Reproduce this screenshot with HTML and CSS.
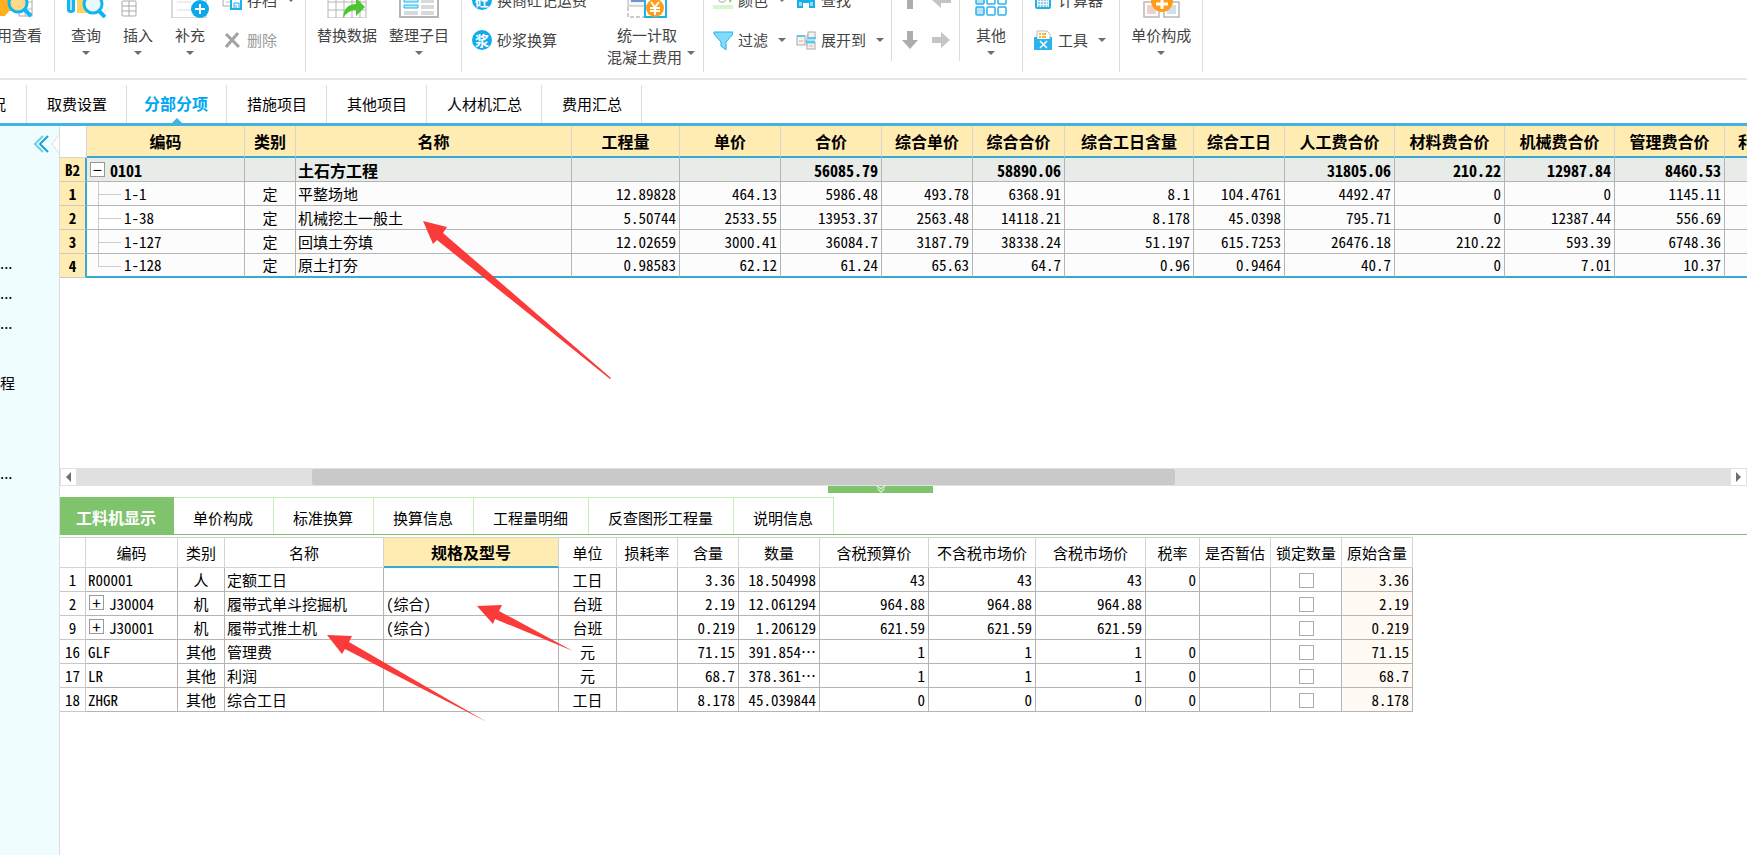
FILE: index.html
```html
<!DOCTYPE html>
<html lang="zh-CN">
<head>
<meta charset="utf-8">
<title>分部分项</title>
<link rel="stylesheet" href="styles.css">
</head>
<body>
<header class="ribbon">
  <div class="group group-first">
    <button class="big">
      <svg class="art" viewBox="0 0 40 38"><rect x="20" y="8" width="13" height="28" fill="#fff" stroke="#aaa"/><path d="M20 22h13M20 29h13M26 8v28" stroke="#bbb"/><path d="M0 10h24v21h-14l-4 5H0z" fill="#ffb01f"/><circle cx="19" cy="23" r="9" fill="#ffd98a" stroke="#12b5f3" stroke-width="3"/><path d="M25 29l7 7" stroke="#12b5f3" stroke-width="4"/></svg>
      <span>用查看</span>
    </button>
  </div>
  <i class="sep"></i>
  <div class="group group-edit">
    <button class="big">
      <svg class="art" viewBox="0 0 40 38"><path d="M1 5h8v25a4 3 0 0 1-8 0z" fill="#12b5f3"/><path d="M4 5h2v25H4z" fill="#a8e6fb"/><path d="M11 5h14v30l-4-2H11z" fill="#ffd45e"/><circle cx="27" cy="24" r="9" fill="#e9f8fe" stroke="#12b5f3" stroke-width="3"/><path d="M33 31l6 6" stroke="#12b5f3" stroke-width="4"/></svg>
      <span>查询</span><i class="caret"></i>
    </button>
    <button class="big">
      <svg class="art" viewBox="0 0 40 38"><rect x="4" y="21" width="14" height="15" rx="1" fill="#fff" stroke="#a9a9a9"/><path d="M11 21v15M4 26h14M4 31h14" stroke="#a9a9a9"/></svg>
      <span>插入</span><i class="caret"></i>
    </button>
    <button class="big">
      <svg class="art" viewBox="0 0 40 38"><path d="M2 5v33h34V5" fill="#fff" stroke="#b5b5b5"/><path d="M7 22h14M7 30h14" stroke="#ddd"/><circle cx="30" cy="29" r="9" fill="#0aa9ee"/><path d="M25 29h10M30 24v10" stroke="#fff" stroke-width="2"/></svg>
      <span>补充</span><i class="caret"></i>
    </button>
    <div class="stack">
      <button class="small">
        <svg class="ico" viewBox="0 0 20 20"><path d="M1 0v16h8" fill="none" stroke="#aaa"/><path d="M4 12h4" stroke="#bbb"/><path d="M9 5h10v14H9z" fill="#fff" stroke="#1fb2ea" stroke-width="2"/><path d="M12 19v-6h5v6M14 15v3" fill="none" stroke="#1fb2ea"/></svg>
        <span>存档</span><i class="caret"></i>
      </button>
      <button class="small" disabled>
        <svg class="ico" viewBox="0 0 20 20"><path d="M4 4l13 13M16 3L4 17" stroke="#a3a3a3" stroke-width="3"/></svg>
        <span>删除</span>
      </button>
    </div>
  </div>
  <i class="sep"></i>
  <div class="group group-data">
    <button class="big">
      <svg class="art" viewBox="0 0 40 38"><path d="M1 5h38v33H1z" fill="#fff"/><path d="M1 5v33h38V5M1 22h38M1 30h38M9 5v33M17 5v33M25 5v33M33 5v33" fill="none" stroke="#b5b5b5"/><path d="M16 38q1-14 13-14v-6l9 9-9 9v-6q-8 0-13 8z" fill="#4cc62e"/></svg>
      <span>替换数据</span>
    </button>
    <button class="big">
      <svg class="art" viewBox="0 0 40 38"><path d="M1 5v32h38V5" fill="#fff" stroke="#b5b5b5" stroke-width="2"/><path d="M5 19h14v3H5zM5 25h14v3H5z" fill="#bdeafa" stroke="#27b7ec"/><path d="M22 19h13v4H22zM22 25h13v4H22zM22 31h13v4H22zM5 31h14v4H5z" fill="#d9d9dc"/></svg>
      <span>整理子目</span><i class="caret"></i>
    </button>
  </div>
  <i class="sep"></i>
  <div class="group group-mix">
    <div class="stack">
      <button class="small"><b class="disc">砼</b><span>换商砼记运费</span></button>
      <button class="small"><b class="disc">浆</b><span>砂浆换算</span></button>
    </div>
    <button class="big">
      <svg class="art" viewBox="0 0 40 38"><rect x="1" y="4" width="20" height="22" fill="#f3f6fb" stroke="#b5b5b5"/><path d="M4 21h13" stroke="#6d94cf" stroke-width="2"/><path d="M1 27v10h18" fill="none" stroke="#999" stroke-dasharray="4 2"/><path d="M18 6h21v31H18z" fill="#fff" stroke="#1fb2ea" stroke-width="2"/><circle cx="28" cy="28" r="9" fill="#ff9e16"/><path d="M24 22l4 5 4-5M28 27v8M23 28h10M23 31h10" fill="none" stroke="#fff" stroke-width="2"/></svg>
      <span>统一计取</span>
      <span class="with-caret">混凝土费用<i class="caret"></i></span>
    </button>
  </div>
  <i class="sep"></i>
  <div class="group group-view">
    <div class="stack">
      <button class="small">
        <svg class="ico" viewBox="0 0 20 20"><path d="M4 7l6-6 6 6-5 5H7z" fill="#fff" stroke="#aaa"/><path d="M15 7q3 3 2 5" fill="none" stroke="#7bc862" stroke-width="2"/><path d="M0 15h20v4H0z" fill="#d9f5cf"/></svg>
        <span>颜色</span><i class="caret"></i>
      </button>
      <button class="small">
        <svg class="ico" viewBox="0 0 20 20"><path d="M1 2h19v2l-7 8v8l-5-4v-4L1 4z" fill="#84dafa" stroke="#22b1e8"/></svg>
        <span>过滤</span><i class="caret"></i>
      </button>
    </div>
    <div class="stack">
      <button class="small">
        <svg class="ico" viewBox="0 0 20 20"><path d="M1 18V9l3-6h4v6h4V3h4l3 6v9h-6v-5H7v5z" fill="#16aeea"/><path d="M3 12h3v4H3zM14 12h3v4h-3z" fill="#8fdcf8"/></svg>
        <span>查找</span>
      </button>
      <button class="small">
        <svg class="ico" viewBox="0 0 20 20"><path d="M9 11h2V5h2M11 11v5" fill="none" stroke="#aaa"/><rect x="1" y="6" width="8" height="9" fill="#f3f3f3" stroke="#aaa"/><path d="M3 11h4" stroke="#e2a77a"/><path d="M1 6h8" stroke="#57c9f3" stroke-width="2"/><rect x="12" y="2" width="7" height="7" fill="#f3f3f3" stroke="#aaa"/><path d="M12 8h8" stroke="#57c9f3" stroke-width="2"/><rect x="11" y="12" width="8" height="7" fill="#f3f3f3" stroke="#aaa"/><path d="M10 12h9" stroke="#57c9f3" stroke-width="3"/><path d="M13 16h4" stroke="#e2a77a"/></svg>
        <span>展开到</span><i class="caret"></i>
      </button>
    </div>
  </div>
  <i class="sep short"></i>
  <div class="group group-move">
    <div class="stack">
      <button class="small" aria-label="上移"><svg class="ico" viewBox="0 0 20 20"><path d="M10 0l8 9h-5v10H7V9H2z" fill="#adadad"/></svg></button>
      <button class="small" aria-label="下移"><svg class="ico" viewBox="0 0 20 20"><path d="M7 1h6v9h5l-8 9-8-9h5z" fill="#adadad"/></svg></button>
    </div>
    <div class="stack">
      <button class="small" aria-label="升级"><svg class="ico" viewBox="0 0 20 20"><path d="M20 8v5H10v5L1 10l9-8v6z" fill="#c4c4c4"/></svg></button>
      <button class="small" aria-label="降级"><svg class="ico" viewBox="0 0 20 20"><path d="M1 7h9V2l9 8-9 8v-5H1z" fill="#c4c4c4"/></svg></button>
    </div>
  </div>
  <i class="sep short"></i>
  <div class="group group-other">
    <button class="big">
      <svg class="art" viewBox="0 0 40 38"><g fill="#fff" stroke="#2ab3e8" stroke-width="1.5"><rect x="5" y="16" width="8" height="8" rx="1" fill="#b9e3f5"/><rect x="16" y="16" width="8" height="8" rx="1"/><rect x="27" y="16" width="8" height="8" rx="1"/><rect x="5" y="27" width="8" height="8" rx="1" fill="#b9e3f5"/><rect x="16" y="27" width="8" height="8" rx="1"/><rect x="27" y="27" width="8" height="8" rx="1"/></g></svg>
      <span>其他</span><i class="caret"></i>
    </button>
  </div>
  <i class="sep"></i>
  <div class="group group-tool">
    <div class="stack">
      <button class="small">
        <svg class="ico" viewBox="0 0 20 20"><rect x="3" y="2" width="14" height="16" rx="1" fill="#e8f7fd" stroke="#1fb2ea" stroke-width="2"/><path d="M5 10h10M5 13h10M5 16h10" stroke="#5b93c5" stroke-dasharray="2 1"/></svg>
        <span>计算器</span>
      </button>
      <button class="small">
        <svg class="ico" viewBox="0 0 20 20"><path d="M4 1h10l3 3v6H4z" fill="#fff" stroke="#bbb"/><path d="M6 4h2M9 4h4M6 7h2M9 7h4" stroke="#ffb52e" stroke-width="2"/><path d="M1 7h3v2h13V7h2v13H1z" fill="#2bb4ec"/><path d="M7 11l7 7M14 11l-7 7" stroke="#fff" stroke-width="1.5"/></svg>
        <span>工具</span><i class="caret"></i>
      </button>
    </div>
  </div>
  <i class="sep"></i>
  <div class="group group-price">
    <button class="big">
      <svg class="art" viewBox="0 0 40 38"><g fill="#fff" stroke="#b8b8b8" stroke-width="1.5"><rect x="3" y="22" width="15" height="15"/><rect x="23" y="22" width="15" height="15"/></g><path d="M6 25h9v9H6z" fill="#edcfd0"/><path d="M26 25h9v9h-9z" fill="#cfe0ea"/><circle cx="21" cy="21" r="11" fill="#ff9e16"/><path d="M15 24h12M21 18v11" stroke="#fff" stroke-width="3"/></svg>
      <span>单价构成</span><i class="caret"></i>
    </button>
  </div>
  <i class="sep"></i>
</header>

<nav class="tabs">
  <a href="#" class="tab tab-cut">况</a>
  <a href="#" class="tab">取费设置</a>
  <a href="#" class="tab active">分部分项</a>
  <a href="#" class="tab">措施项目</a>
  <a href="#" class="tab">其他项目</a>
  <a href="#" class="tab">人材机汇总</a>
  <a href="#" class="tab">费用汇总</a>
</nav>

<div class="work">
  <aside class="side">
    <button class="fold" aria-label="收起"><svg viewBox="0 0 26 24"><path d="M10 4L2 12l8 8" fill="none" stroke="#6fcdf0" stroke-width="2"/><path d="M15 4l-8 8 8 8" fill="none" stroke="#1a9fd0" stroke-width="2"/><path d="M26 2v2l-7 8 7 8v2z" fill="#fff"/><path d="M26 3l-7 9 7 9" fill="none" stroke="#ddd"/></svg></button>
    <ul class="tree">
      <li>...</li><li>...</li><li>...</li><li></li><li>程</li><li></li><li></li><li>...</li>
    </ul>
  </aside>

  <main class="main">
    <section class="upper">
      <table class="grid bill">
        <colgroup><col class="w27"><col class="w158"><col class="w51"><col class="w276"><col class="w108"><col class="w101"><col class="w101"><col class="w91"><col class="w92"><col class="w129"><col class="w91"><col class="w110"><col class="w110"><col class="w110"><col class="w110"><col class="w91"></colgroup>
        <thead><tr><th class="corner"></th><th>编码</th><th>类别</th><th>名称</th><th>工程量</th><th>单价</th><th>合价</th><th>综合单价</th><th>综合合价</th><th>综合工日含量</th><th>综合工日</th><th>人工费合价</th><th>材料费合价</th><th>机械费合价</th><th>管理费合价</th><th>利润合价</th></tr></thead>
        <tbody>
          <tr class="sum"><th>B2</th><td><button class="box" aria-label="折叠">−</button>0101</td><td></td><td>土石方工程</td><td></td><td></td><td class="n">56085.79</td><td></td><td class="n">58890.06</td><td></td><td></td><td class="n">31805.06</td><td class="n">210.22</td><td class="n">12987.84</td><td class="n">8460.53</td><td></td></tr>
          <tr><th>1</th><td class="child">1-1</td><td class="c">定</td><td>平整场地</td><td class="n">12.89828</td><td class="n">464.13</td><td class="n">5986.48</td><td class="n">493.78</td><td class="n">6368.91</td><td class="n">8.1</td><td class="n">104.4761</td><td class="n">4492.47</td><td class="n">0</td><td class="n">0</td><td class="n">1145.11</td><td></td></tr>
          <tr><th>2</th><td class="child current">1-38</td><td class="c">定</td><td>机械挖土一般土</td><td class="n">5.50744</td><td class="n">2533.55</td><td class="n">13953.37</td><td class="n">2563.48</td><td class="n">14118.21</td><td class="n">8.178</td><td class="n">45.0398</td><td class="n">795.71</td><td class="n">0</td><td class="n">12387.44</td><td class="n">556.69</td><td></td></tr>
          <tr><th>3</th><td class="child">1-127</td><td class="c">定</td><td>回填土夯填</td><td class="n">12.02659</td><td class="n">3000.41</td><td class="n">36084.7</td><td class="n">3187.79</td><td class="n">38338.24</td><td class="n">51.197</td><td class="n">615.7253</td><td class="n">26476.18</td><td class="n">210.22</td><td class="n">593.39</td><td class="n">6748.36</td><td></td></tr>
          <tr><th>4</th><td class="child">1-128</td><td class="c">定</td><td>原土打夯</td><td class="n">0.98583</td><td class="n">62.12</td><td class="n">61.24</td><td class="n">65.63</td><td class="n">64.7</td><td class="n">0.96</td><td class="n">0.9464</td><td class="n">40.7</td><td class="n">0</td><td class="n">7.01</td><td class="n">10.37</td><td></td></tr>
        </tbody>
      </table>
    </section>

    <div class="scroll">
      <button class="step" aria-label="向左"><svg viewBox="0 0 15 16"><path d="M10 3v10L5 8z" fill="#6e6e78"/></svg></button>
      <div class="track"><div class="thumb"></div></div>
      <button class="step" aria-label="向右"><svg viewBox="0 0 15 16"><path d="M5 3v10l5-5z" fill="#6e6e78"/></svg></button>
    </div>
    <div class="splitter"><button class="grip" aria-label="收起下方面板"><svg viewBox="0 0 12 8"><path d="M1 0l5 3 5-3M2 3l4 4 4-4" fill="none" stroke="#d9f0d2" stroke-width="1.5"/></svg></button></div>

    <nav class="subtabs">
      <a href="#" class="subtab active">工料机显示</a>
      <a href="#" class="subtab">单价构成</a>
      <a href="#" class="subtab">标准换算</a>
      <a href="#" class="subtab">换算信息</a>
      <a href="#" class="subtab">工程量明细</a>
      <a href="#" class="subtab">反查图形工程量</a>
      <a href="#" class="subtab">说明信息</a>
    </nav>

    <section class="lower">
      <table class="grid res">
        <colgroup><col class="w26"><col class="w92"><col class="w47"><col class="w159"><col class="w175"><col class="w58"><col class="w61"><col class="w61"><col class="w81"><col class="w109"><col class="w107"><col class="w110"><col class="w54"><col class="w71"><col class="w71"><col class="w71"></colgroup>
        <thead><tr><th></th><th>编码</th><th>类别</th><th>名称</th><th class="sel">规格及型号</th><th>单位</th><th>损耗率</th><th>含量</th><th>数量</th><th>含税预算价</th><th>不含税市场价</th><th>含税市场价</th><th>税率</th><th>是否暂估</th><th>锁定数量</th><th>原始含量</th></tr></thead>
        <tbody>
          <tr><th>1</th><td>R00001</td><td class="c">人</td><td>定额工日</td><td></td><td class="c">工日</td><td></td><td class="n">3.36</td><td class="n">18.504998</td><td class="n">43</td><td class="n">43</td><td class="n">43</td><td class="n">0</td><td></td><td class="c"><input type="checkbox" aria-label="锁定数量"></td><td class="n orig">3.36</td></tr>
          <tr><th>2</th><td><button class="box" aria-label="展开">+</button>J30004</td><td class="c">机</td><td>履带式单斗挖掘机</td><td>(综合)</td><td class="c">台班</td><td></td><td class="n">2.19</td><td class="n">12.061294</td><td class="n">964.88</td><td class="n">964.88</td><td class="n">964.88</td><td></td><td></td><td class="c"><input type="checkbox" aria-label="锁定数量"></td><td class="n orig">2.19</td></tr>
          <tr><th>9</th><td><button class="box" aria-label="展开">+</button>J30001</td><td class="c">机</td><td>履带式推土机</td><td>(综合)</td><td class="c">台班</td><td></td><td class="n">0.219</td><td class="n">1.206129</td><td class="n">621.59</td><td class="n">621.59</td><td class="n">621.59</td><td></td><td></td><td class="c"><input type="checkbox" aria-label="锁定数量"></td><td class="n orig">0.219</td></tr>
          <tr><th>16</th><td>GLF</td><td class="c">其他</td><td>管理费</td><td></td><td class="c">元</td><td></td><td class="n">71.15</td><td class="n">391.854…</td><td class="n">1</td><td class="n">1</td><td class="n">1</td><td class="n">0</td><td></td><td class="c"><input type="checkbox" aria-label="锁定数量"></td><td class="n orig">71.15</td></tr>
          <tr><th>17</th><td>LR</td><td class="c">其他</td><td>利润</td><td></td><td class="c">元</td><td></td><td class="n">68.7</td><td class="n">378.361…</td><td class="n">1</td><td class="n">1</td><td class="n">1</td><td class="n">0</td><td></td><td class="c"><input type="checkbox" aria-label="锁定数量"></td><td class="n orig">68.7</td></tr>
          <tr><th>18</th><td>ZHGR</td><td class="c">其他</td><td>综合工日</td><td></td><td class="c">工日</td><td></td><td class="n">8.178</td><td class="n">45.039844</td><td class="n">0</td><td class="n">0</td><td class="n">0</td><td class="n">0</td><td></td><td class="c"><input type="checkbox" aria-label="锁定数量"></td><td class="n orig">8.178</td></tr>
        </tbody>
      </table>
    </section>
  </main>
</div>

<svg class="marks" width="620" height="730" viewBox="0 0 620 730" aria-hidden="true">
  <path d="M423 221l24 6-4 6 168 145-1 1-173-139-4 4z"/>
  <path d="M477 606l25-1-3 6 74 40-78-32-2 5z"/>
  <path d="M327 635l25 1-3 6 138 80-142-73-3 5z"/>
</svg>
</body>
</html>
```

FILE: styles.css
```css
* { box-sizing: border-box; }

body {
  margin: 0;
  min-height: 100vh;
  display: flex;
  flex-direction: column;
  position: relative;
  overflow: hidden;
  background: #fff;
  color: #000;
  font: 15px/22px "Noto Sans CJK SC", sans-serif;
}

button {
  padding: 0;
  border: 0;
  background: none;
  color: inherit;
  font: inherit;
}

a { color: inherit; text-decoration: none; }

/* ribbon: its upper part is scrolled out of view */
.ribbon {
  display: flex;
  align-items: flex-end;
  height: 80px;
  padding-bottom: 6px;
  border-bottom: 2px solid #e6e6e6;
  overflow: hidden;
  color: #444;
}
.group {
  display: flex;
  flex: none;
  align-items: flex-start;
  height: 92px;
}
.sep {
  flex: none;
  width: 1px;
  height: 92px;
  background: #dcdcdc;
}
.sep.short { height: 81px; margin-bottom: 11px; }
.group-first { width: 54px; justify-content: flex-end; padding-right: 12px; }
.group-edit { padding: 0 10px 0 5px; }
.group-edit .big { width: 52px; }
.group-edit .stack { padding-left: 6px; }
.group-data { gap: 12px; padding: 0 12px 0 11px; }
.group-mix { gap: 20px; padding: 0 8px 0 10px; }
.group-mix .big > :not(.with-caret) { margin-right: 8px; }
.group-view { gap: 10px; padding: 0 7px 0 9px; }
.group-move { gap: 11px; padding: 0 8px; }
.group-other { width: 62px; justify-content: center; }
.group-tool { padding: 0 13px 0 10px; }
.group-price { padding: 0 11px; }

.big {
  display: flex;
  flex-direction: column;
  align-items: center;
  white-space: nowrap;
}
.art { width: 40px; height: 38px; margin-bottom: 6px; }
.big > .caret { margin-top: 5px; }
.caret {
  width: 8px;
  border: 4px solid transparent;
  border-top-color: #6c6c78;
  border-bottom: 0;
}
.with-caret { display: flex; gap: 5px; }
.with-caret .caret { margin-top: 5px; height: 4px; }

.stack { display: flex; flex-direction: column; }
.small {
  display: flex;
  align-items: center;
  gap: 5px;
  height: 40px;
  white-space: nowrap;
}
.small .caret { margin-left: 5px; }
.small:disabled { color: #999; }
.ico { width: 20px; height: 20px; }
.disc {
  width: 20px;
  height: 20px;
  border-radius: 50%;
  background: #0fabeb;
  color: #fff;
  font-size: 14px;
  line-height: 20px;
  text-align: center;
}

/* page tabs */
.tabs {
  display: flex;
  align-items: flex-end;
  height: 46px;
  border-bottom: 3px solid #40b4e5;
}
.tab {
  position: relative;
  height: 38px;
  padding: 7px 20px 0;
  border-right: 1px solid #ddd;
  line-height: 24px;
}
.tab:not(.tab-cut) { padding: 7px 19px 0 20px; }
.tab-cut { width: 27px; padding: 7px 20px 0 0; direction: rtl; }
.tab.active {
  padding: 6px 18px 0 17px;
  color: #00a8f3;
  font-size: 16px;
  font-weight: 700;
}
.tab.active::after {
  content: "";
  position: absolute;
  left: 45px;
  bottom: 0;
  border: 5px solid transparent;
  border-top: 0;
  border-bottom-color: #40b4e5;
}

.work { display: flex; flex: 1; }
.side {
  display: flex;
  flex-direction: column;
  flex: none;
  width: 60px;
  border-right: 1px solid #dcdcdc;
  background: #f0fdff;
}
.fold { align-self: flex-end; height: 24px; margin-top: 6px; }
.fold svg { display: block; width: 26px; height: 24px; }
.tree { margin: 92px 0 0; padding: 0; list-style: none; }
.tree li { height: 30px; line-height: 30px; }

.main { flex: 1; min-width: 0; display: flex; flex-direction: column; }
.upper { flex: none; height: 40vh; overflow: hidden; }

/* grids */
.grid {
  width: 0;
  table-layout: fixed;
  border-collapse: separate;
  border-spacing: 0;
  font-feature-settings: "hwid";
}
.grid th, .grid td {
  height: 24px;
  padding: 1px 2px 0;
  border-right: 1px solid #b4b4b4;
  border-bottom: 1px solid #b4b4b4;
  line-height: 22px;
  text-align: left;
  white-space: nowrap;
  overflow: hidden;
}
.grid th { padding: 1px 0 0; text-align: center; font-weight: 400; }
.grid .n { padding-right: 3px; text-align: right; }
.grid .c { text-align: center; }

.bill thead th {
  height: 32px;
  padding: 0;
  border-right-color: #d4d4d4;
  border-bottom: 2px solid #3aa9d2;
  background: #ffecb3;
  font-size: 16px;
  font-weight: 700;
}
.bill thead .corner { background: #fff; border-bottom: 1px solid #d4d4d4; }
.bill tbody th {
  border-right: 2px solid #3aa9d2;
  border-bottom-color: #c9c9c9;
  background: #ffecb3;
  font-weight: 700;
}
.bill td { background: #fcfcfc; }
.bill .current { background: #fff; }
.bill .sum td { background: #e8ece8; font-size: 16px; font-weight: 700; }
.bill tbody tr:last-child td { padding-top: 0; border-bottom: 2px solid #3aa9d2; }
.grid .child { position: relative; padding-left: 37px; }
.child::before, .child::after {
  content: "";
  position: absolute;
  left: 11px;
  top: 0;
  width: 22px;
  height: 12px;
  border-left: 1px solid #ccc;
  border-bottom: 1px solid #ccc;
}
.child::after { width: 1px; height: 24px; border-bottom: 0; }
.bill tbody tr:last-child .child::after { display: none; }

.box {
  width: 15px;
  height: 15px;
  margin: 0 5px 0 1px;
  border: 1px solid #999;
  background: #fff;
  font-size: 16px;
  font-weight: 400;
  line-height: 12px;
  vertical-align: 1px;
}

/* horizontal scroll bar and splitter */
.scroll {
  display: flex;
  height: 18px;
  padding: 1px;
  background: #e1e1e1;
}
.step { width: 15px; background: #fff; }
.step svg { display: block; width: 15px; height: 16px; }
.track { flex: 1; padding: 0 33% 0 14%; }
.thumb { height: 16px; border-radius: 2px; background: #c9c9c9; }
.splitter { height: 11px; text-align: center; line-height: 0; }
.grip { width: 105px; height: 7px; margin-right: 46px; background: #7fc36c; }
.grip svg { width: 12px; height: 7px; }

.subtabs { display: flex; height: 38px; border-bottom: 1px solid #7fc36c; }
.subtab {
  padding: 9px 20px 0 19px;
  border: 1px solid #c9edba;
  border-width: 1px 1px 0 0;
}
.subtab.active {
  padding: 8px 17px 0 16px;
  border-color: #7fc36c;
  background: #7fc36c;
  color: #fff;
  font-size: 16px;
  font-weight: 700;
}

.lower { flex: 1; padding-top: 2px; overflow: hidden; }
.res thead th {
  height: 31px;
  padding: 0;
  border-color: #d4d4d4;
  border-top: 1px solid #d4d4d4;
}
.res thead .sel {
  border-bottom: 2px solid #3aa9d2;
  background: #ffecb3;
  font-size: 16px;
  font-weight: 700;
}
.res tbody th { border-color: #c9c9c9; }
.res .orig { background: #fffaf3; }
.res input {
  appearance: none;
  display: block;
  width: 15px;
  height: 15px;
  margin: 0 auto;
  border: 1px solid #aaa;
  background: #fff;
}

.w26 { width: 26px; } .w27 { width: 27px; } .w47 { width: 47px; }
.w51 { width: 51px; } .w54 { width: 54px; } .w58 { width: 58px; }
.w61 { width: 61px; } .w71 { width: 71px; } .w81 { width: 81px; }
.w91 { width: 91px; } .w92 { width: 92px; } .w101 { width: 101px; }
.w107 { width: 107px; } .w108 { width: 108px; } .w109 { width: 109px; }
.w110 { width: 110px; } .w129 { width: 129px; } .w158 { width: 158px; }
.w159 { width: 159px; } .w175 { width: 175px; } .w276 { width: 276px; }

/* red annotation arrows */
.marks {
  position: absolute;
  left: 0;
  top: 0;
  fill: #fb3a3a;
  pointer-events: none;
}
```
